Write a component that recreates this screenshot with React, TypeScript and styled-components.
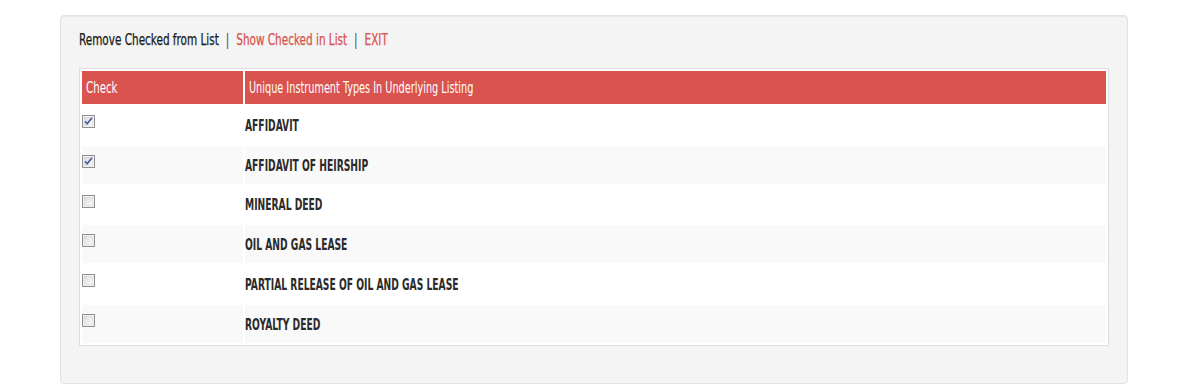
import React from "react";
import styled, { createGlobalStyle } from "styled-components";

const GlobalStyle = createGlobalStyle`
  body {
    margin: 0;
    background: #fff;
    font-family: "DejaVu Sans Condensed", "Liberation Sans", sans-serif;
  }
`;

const Well = styled.div`
  box-sizing: border-box;
  width: 1068px;
  margin: 15px 0 0 60px;
  padding: 14px 18px 37px;
  background: #f4f4f4;
  border: 1px solid #e3e3e3;
  border-radius: 4px;
  box-shadow: inset 0 1px 1px rgba(0, 0, 0, 0.05);
`;

// narrow, Oswald-like lettering from a condensed face squeezed a bit further
const Narrow = styled.span<{ $k: number }>`
  display: inline-block;
  white-space: nowrap;
  transform: scaleX(${(p) => p.$k});
  transform-origin: left center;
`;

const Actions = styled.div`
  display: flex;
  align-items: center;
  height: 20px;
  margin-bottom: 18px;
  font-size: 15px;
  transform: scaleX(0.775);
  transform-origin: left center;
`;

const Action = styled.a<{ $danger?: boolean }>`
  color: ${(p) => (p.$danger ? "#d9534f" : "#1a1a1a")};
  text-decoration: none;
  cursor: pointer;
  -webkit-text-stroke: 0.25px currentColor;
`;

const Sep = styled.span`
  color: #3a3f5c;
  margin: 0 9px;
`;

const Table = styled.table`
  width: 100%;
  border: 1px solid #ddd;
  border-spacing: 2px;
  background: #fff;
`;

const HeadCell = styled.th<{ $w?: number }>`
  width: ${(p) => (p.$w ? `${p.$w}px` : "auto")};
  height: 33px;
  padding: 0 4px;
  background: #d9534f;
  color: #fff;
  font-weight: normal;
  font-size: 15px;
  text-align: left;
  vertical-align: middle;
`;

const Row = styled.tr<{ $striped: boolean }>`
  background: ${(p) => (p.$striped ? "#f9f9f9" : "#fff")};
`;

const CheckCell = styled.td`
  height: 37.8px;
  padding: 7px 0 0;
  vertical-align: top;
  box-sizing: border-box;
`;

const NameCell = styled.td`
  padding: 2px 0 0;
  vertical-align: middle;
  color: #2a2a2a;
  font-size: 15px;
  font-weight: bold;
`;

const Box = styled.span`
  display: block;
  width: 13px;
  height: 13px;
`;

function Checkbox({ checked }: { checked: boolean }) {
  return (
    <Box>
      <svg width="13" height="13" viewBox="0 0 13 13">
        <defs>
          <linearGradient id="cbg" x1="0" y1="0" x2="1" y2="1">
            <stop offset="0" stopColor="#dcdcdc" />
            <stop offset="1" stopColor="#fbfbfb" />
          </linearGradient>
        </defs>
        <rect x="0.5" y="0.5" width="12" height="12" fill="#fff" stroke="#8e8f8f" />
        <rect x="2" y="2" width="9" height="9" fill="url(#cbg)" stroke="#c9c9c9" strokeWidth="0.6" />
        {checked && (
          <path d="M3 6.4 L5.2 8.8 L10 2.8" fill="none" stroke="#4a5ba8" strokeWidth="1.7" />
        )}
      </svg>
    </Box>
  );
}

const items = [
  { name: "AFFIDAVIT", checked: true },
  { name: "AFFIDAVIT OF HEIRSHIP", checked: true },
  { name: "MINERAL DEED", checked: false },
  { name: "OIL AND GAS LEASE", checked: false },
  { name: "PARTIAL RELEASE OF OIL AND GAS LEASE", checked: false },
  { name: "ROYALTY DEED", checked: false },
];

export default function App() {
  return (
    <>
      <GlobalStyle />
      <Well>
        <Actions>
          <Action>Remove Checked from List</Action>
          <Sep>|</Sep>
          <Action $danger>Show Checked in List</Action>
          <Sep>|</Sep>
          <Action $danger>EXIT</Action>
        </Actions>
        <Table>
          <thead>
            <tr>
              <HeadCell $w={153}>
                <Narrow $k={0.76}>Check</Narrow>
              </HeadCell>
              <HeadCell>
                <Narrow $k={0.72}>Unique Instrument Types In Underlying Listing</Narrow>
              </HeadCell>
            </tr>
          </thead>
          <tbody>
            {items.map((it, i) => (
              <Row key={it.name} $striped={i % 2 === 1}>
                <CheckCell>
                  <Checkbox checked={it.checked} />
                </CheckCell>
                <NameCell>
                  <Narrow $k={0.68}>{it.name}</Narrow>
                </NameCell>
              </Row>
            ))}
          </tbody>
        </Table>
      </Well>
    </>
  );
}
